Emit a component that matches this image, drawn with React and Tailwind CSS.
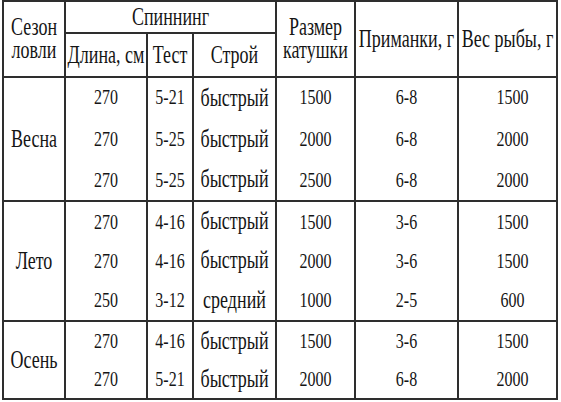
// words and numbers are set a little differently, like in the printed table
const W = ({ children }) => (
  <span className="inline-block origin-center scale-y-[1.38] text-[18px] leading-[17px]">{children}</span>
);
const N = ({ children }) => (
  <span className="inline-block origin-center scale-y-[1.3] text-[16px] leading-[16px]">{children}</span>
);

const groups = [
  {
    season: "Весна",
    h: "h-[122px]",
    rows: [
      ["270", "5-21", "быстрый", "1500", "6-8", "1500"],
      ["270", "5-25", "быстрый", "2000", "6-8", "2000"],
      ["270", "5-25", "быстрый", "2500", "6-8", "2000"],
    ],
  },
  {
    season: "Лето",
    h: "h-[118px]",
    rows: [
      ["270", "4-16", "быстрый", "1500", "3-6", "1500"],
      ["270", "4-16", "быстрый", "2000", "3-6", "1500"],
      ["250", "3-12", "средний", "1000", "2-5", "600"],
    ],
  },
  {
    season: "Осень",
    h: "h-[76px]",
    rows: [
      ["270", "4-16", "быстрый", "1500", "3-6", "1500"],
      ["270", "5-21", "быстрый", "2000", "6-8", "2000"],
    ],
  },
];

const box = "bg-white flex items-center justify-center text-center";

export default function App() {
  return (
    <div className="bg-white w-[561px] h-[402px] overflow-hidden pl-[2px] font-serif text-[#151515]">
      <div className="grid w-[556px] grid-cols-[60px_80px_44px_81px_77px_101px_97px] gap-[2px] p-[2px] bg-[#2e2e2e] font-[Liberation_Serif]">
        <div className={box + " row-span-2"}>
          <W>
            Сезон
            <br />
            ловли
          </W>
        </div>
        <div className={box + " col-span-3 h-[30px]"}>
          <W>Спиннинг</W>
        </div>
        <div className={box + " row-span-2"}>
          <W>
            Размер
            <br />
            катушки
          </W>
        </div>
        <div className={box + " row-span-2"}>
          <W>Приманки, г</W>
        </div>
        <div className={box + " row-span-2"}>
          <W>Вес рыбы, г</W>
        </div>
        <div className={box + " h-[42px]"}>
          <W>Длина, см</W>
        </div>
        <div className={box + " h-[42px]"}>
          <W>Тест</W>
        </div>
        <div className={box + " h-[42px]"}>
          <W>Строй</W>
        </div>

        {groups.map((g) => (
          <div key={g.season} className="contents">
            <div className={box + " " + g.h}>
              <W>{g.season}</W>
            </div>
            {[0, 1, 2, 3, 4, 5].map((j) => (
              <div key={j} className={"bg-white flex flex-col " + g.h}>
                {g.rows.map((r, i) => (
                  <div
                    key={i}
                    className={
                      "flex-1 flex items-center justify-center" +
                      (j === 5 ? " pl-[10px]" : "")
                    }
                  >
                    {j === 2 ? <W>{r[j]}</W> : <N>{r[j]}</N>}
                  </div>
                ))}
              </div>
            ))}
          </div>
        ))}
      </div>
    </div>
  );
}
